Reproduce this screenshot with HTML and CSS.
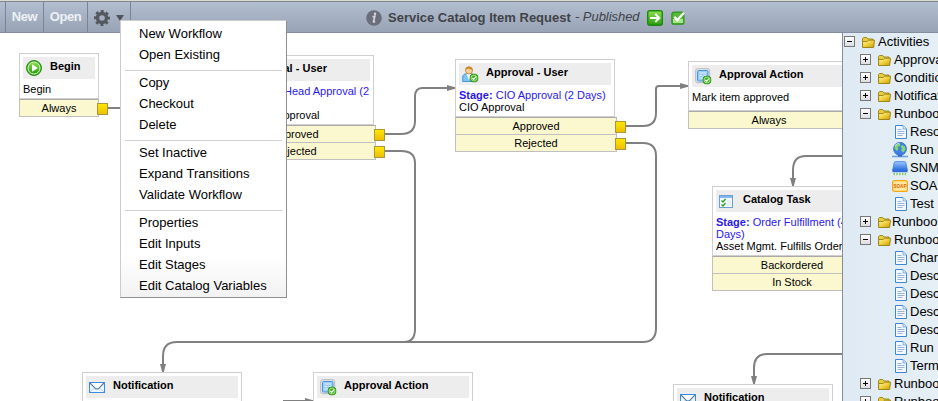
FILE: index.html
```html
<!DOCTYPE html>
<html lang="en">
<head>
<meta charset="utf-8">
<title>Workflow Editor</title>
<link rel="stylesheet" href="styles.css">
</head>
<body>
<svg class="defs" width="0" height="0" aria-hidden="true">
  <defs>
    <linearGradient id="green" x1="0" y1="0" x2="0" y2="1"><stop offset="0" stop-color="#8ee04c"/><stop offset="1" stop-color="#269a10"/></linearGradient>
    <linearGradient id="gold" x1="0" y1="0" x2="1" y2="1"><stop offset="0" stop-color="#fff6b0"/><stop offset=".5" stop-color="#f0d040"/><stop offset="1" stop-color="#c89c00"/></linearGradient>
    <linearGradient id="blue" x1="0" y1="0" x2="0" y2="1"><stop offset="0" stop-color="#9cc8ff"/><stop offset="1" stop-color="#2468dc"/></linearGradient>
    <marker id="arrow" markerUnits="userSpaceOnUse" markerWidth="9" markerHeight="6" refX="8" refY="3" orient="auto"><path d="M0 0L8 2.2V3.8L0 6z" fill="#808080"/></marker>
  </defs>
  <symbol id="i-play" viewBox="0 0 16 16"><circle cx="8" cy="8" r="7.5" fill="#37a51e" stroke="#2d8d1a"/><circle cx="8" cy="8" r="6" fill="url(#green)" stroke="#d9f6c6"/><path d="M6 4.3v7.4L12 8z" fill="#fff"/></symbol>
  <symbol id="i-ok" viewBox="0 0 9 9"><circle cx="4.5" cy="4.5" r="4.1" fill="#41b31e" stroke="#2b8a14" stroke-width=".8"/><circle cx="4.5" cy="4.5" r="2.9" fill="none" stroke="#c9f2b0" stroke-width=".7"/><path d="M2.8 4.5l1.4 1.4 2.2-2.7" fill="none" stroke="#fff" stroke-width="1.1"/></symbol>
  <symbol id="i-user" viewBox="0 0 17 17"><path d="M.7 15.5V11C.7 8.500 3 7.500 7 7.500s6 1.500 6 4v4z" fill="#7cc4f2" stroke="#2c84ca" stroke-width=".8"/><path d="M4.500 8l2.500 6 2.500-6z" fill="#fff"/><circle cx="7" cy="4.500" r="3.500" fill="#f8cf9c" stroke="#b97824" stroke-width=".7"/><path d="M3.300 4.500C3 1.500 5 .4 7 .4s4 1.200 3.700 4.100C9.500 3 7.500 3.500 6 2.800 5 3 4 3.500 3.300 4.500z" fill="#cf8a2a"/><use href="#i-ok" x="7.500" y="7.500" width="9" height="9"/></symbol>
  <symbol id="i-action" viewBox="0 0 17 17"><rect x=".7" y=".7" width="14" height="14" rx="2" fill="#e2e6ea" stroke="#b4bac2"/><rect x="2.500" y="2.500" width="10.500" height="10.500" rx="1" fill="#9ccdfa" stroke="#4d93d9"/><path d="M4.500 5h6.500M4.500 7.500h2.500m1.500 0H11M4.500 10h4" stroke="#dff0ff" stroke-width="1.200"/><use href="#i-ok" x="7.500" y="7.500" width="9" height="9"/></symbol>
  <symbol id="i-task" viewBox="0 0 14 13"><rect x=".5" y=".5" width="13" height="12" fill="#f4faff" stroke="#6b9fd3"/><path d="M1 2h12" stroke="#80b9f2" stroke-width="2"/><path d="M2.500 5.500L4 7l2.500-3M2.500 9.500L4 11l2.500-3" fill="none" stroke="#35a020" stroke-width="1.400"/><path d="M8 6h4M8 8h4M8 10h4" stroke="#d8e8f6"/></symbol>
  <symbol id="i-mail" viewBox="0 0 16 11"><rect x=".5" y=".5" width="15" height="10" fill="#eef6ff" stroke="#3d8ae0"/><path d="M1 10l4.500-4M15 10l-4.500-4" stroke="#b8d4f5"/><path d="M1 1l5 5.200q2 1.500 4 0L15 1" fill="#fff" stroke="#527aa6" stroke-width="1.100"/></symbol>
  <symbol id="i-folder" viewBox="0 0 13 11"><path d="M.5 9.500V1.500l1-1h3.200l1.300 1.500H11V10H1z" fill="#e8cc40" stroke="#96800c" stroke-width=".9"/><path d="M.6 4.500h4.700l1.200-1.300h6.100L11.600 10.500H.6z" fill="url(#gold)" stroke="#907808" stroke-width=".8"/></symbol>
  <symbol id="i-doc" viewBox="0 0 12 14"><path d="M.5.5H8L11.500 4v9.500H.5z" fill="#f3f9ff" stroke="#3d86d6"/><path d="M8 .5V4h3.500" fill="#cfe4fb" stroke="#69a3e4" stroke-width=".8"/><path d="M2.500 4.500h4M2.500 6.500h7M2.500 8.500h7M2.500 10.500h5" stroke="#8cadd6" stroke-width=".9"/></symbol>
  <symbol id="i-globe" viewBox="0 0 16 16"><path d="M0 14.500h16" stroke="#6fa5e8" stroke-width="1.600"/><path d="M8 12v3" stroke="#477fc9" stroke-width="4"/><circle cx="8" cy="6.800" r="6.500" fill="#3f7fe6" stroke="#2458b8" stroke-width=".6"/><path d="M3 3q3-2.500 5.500-1.500L8 4 5.500 5 6.500 7 4.500 9 2.500 6zM10 3l3 1.500.5 3-2 3-2.500-2L10 6 8.500 5z" fill="#86d870"/><path d="M3 4q1-2 4-3" stroke="#cfe3ff" fill="none"/></symbol>
  <symbol id="i-drive" viewBox="0 0 16 15"><path d="M3.500.6h9q1 0 1.300 1L15.500 9.500H.5L2.200 1.600q.3-1 1.300-1z" fill="url(#blue)" stroke="#3b72d4" stroke-width=".7"/><path d="M.5 9.200h15v2.300H.5z" fill="#2f69d5"/><path d="M.5 11.500h15V14.500H.5z" fill="#eef5ee"/><path d="M1.500 13.200h13" stroke="#7fc66e" stroke-width="2.200" stroke-dasharray="1.500 1.300"/></symbol>
  <symbol id="i-soap" viewBox="0 0 16 12"><rect x=".6" y=".6" width="14.800" height="10.800" rx="2" fill="#ffe9a0" stroke="#f5a70c" stroke-width="1.200"/><text x="8" y="8.300" text-anchor="middle" font-family="Liberation Sans" font-size="6.200" font-weight="700" fill="#e35b00" textLength="13" lengthAdjust="spacingAndGlyphs">SOAP</text></symbol>
</svg>

<header class="toolbar">
  <span class="tool stub"></span>
  <span class="tool new">New</span>
  <span class="tool open">Open</span>
  <span class="tool gear">
    <svg width="16" height="16" viewBox="0 0 16 16"><circle cx="8" cy="8" r="4.500" fill="none" stroke="#54585f" stroke-width="3.400"/><circle cx="8" cy="8" r="6.800" fill="none" stroke="#54585f" stroke-width="2.400" stroke-dasharray="3 2.340" stroke-dashoffset="1.500"/></svg>
    <svg width="8" height="6" viewBox="0 0 8 6"><path d="M0 0h8L4 6z" fill="#4f535a"/></svg>
  </span>
  <div class="title">
    <svg class="info" width="16" height="16" viewBox="0 0 16 16"><circle cx="8" cy="8" r="7.800" fill="#6c6f7b"/><path d="M6.500 6.800L8.800 6.200l-1.300 5.600q.7.500 1.500-.5" fill="none" stroke="#d3d7df" stroke-width="1.700"/><circle cx="9" cy="3.700" r="1.200" fill="#d5d9e0"/></svg>
    <b>Service Catalog Item Request</b><i>- Published</i>
    <svg class="go" width="16" height="16" viewBox="0 0 16 16"><rect x=".7" y=".7" width="14.600" height="14.600" rx="2" fill="url(#green)" stroke="#1c8a0c" stroke-width="1.400"/><path d="M3 8h9M8.300 4l4 4-4 4" fill="none" stroke="#fff" stroke-width="1.900"/></svg>
    <svg class="check" width="15" height="14" viewBox="0 0 15 14"><rect x=".9" y="1.200" width="12" height="12" rx="2" fill="#56b834" stroke="#2d9418" stroke-width="1.200"/><path d="M2 8h10v4H2z" fill="#a9e58a"/><path d="M3.300 5.800l3 3.300L13 1.800" fill="none" stroke="#fff" stroke-width="2.300"/></svg>
  </div>
</header>

<main class="workspace">
  <section class="canvas">
    <svg class="links" width="842" height="368" viewBox="0 33 842 368">
      <path d="M107 108H125"/>
      <path d="M385 134H401Q415 134 415 121V97Q415 88 422 88H455" marker-end="url(#arrow)"/>
      <path d="M385 151H401Q415 151 415 163V329Q415 342 404 342"/>
      <path d="M626 126H643Q656 126 656 113V89Q656 86 659 86H688" marker-end="url(#arrow)"/>
      <path d="M626 143H643Q656 143 656 156V328Q656 342 643 342H177Q163 342 163 356V372" marker-end="url(#arrow)"/>
      <path d="M842 156H806Q793 156 793 170V186" marker-end="url(#arrow)"/>
      <path d="M842 354H767Q754 354 754 368V384" marker-end="url(#arrow)"/>
      <path d="M283 401H313" marker-end="url(#arrow)"/>
    </svg>

    <article class="node begin">
      <div class="card"><h3><svg width="16" height="16"><use href="#i-play"/></svg>Begin</h3><p>Begin</p></div>
      <ul><li>Always</li></ul>
    </article>
    <article class="node head-approval">
      <div class="card"><h3><svg width="17" height="17"><use href="#i-user"/></svg>Approval - User</h3><p><span class="stage"><b>Stage:</b> Dept. Head Approval (2 Days)</span><br>Dept. Head Approval</p></div>
      <ul><li>Approved</li><li>Rejected</li></ul>
    </article>
    <article class="node cio">
      <div class="card"><h3><svg width="17" height="17"><use href="#i-user"/></svg>Approval - User</h3><p><span class="stage"><b>Stage:</b> CIO Approval (2 Days)</span><br>CIO Approval</p></div>
      <ul><li>Approved</li><li>Rejected</li></ul>
    </article>
    <article class="node mark">
      <div class="card"><h3><svg width="17" height="17"><use href="#i-action"/></svg>Approval Action</h3><p>Mark item approved</p></div>
      <ul><li>Always</li></ul>
    </article>
    <article class="node task">
      <div class="card"><h3><svg width="14" height="13"><use href="#i-task"/></svg>Catalog Task</h3><p><span class="stage"><b>Stage:</b> Order Fulfillment (4 Days)</span><br>Asset Mgmt. Fulfills Order</p></div>
      <ul><li>Backordered</li><li>In Stock</li></ul>
    </article>
    <article class="node notify-a">
      <div class="card"><h3><svg width="16" height="11"><use href="#i-mail"/></svg>Notification</h3></div>
    </article>
    <article class="node action-b">
      <div class="card"><h3><svg width="17" height="17"><use href="#i-action"/></svg>Approval Action</h3></div>
    </article>
    <article class="node notify-b">
      <div class="card"><h3><svg width="16" height="11"><use href="#i-mail"/></svg>Notification</h3></div>
    </article>
  </section>

  <aside class="tree">
    <div class="row root"><span class="toggle open-t"></span><svg width="13" height="11"><use href="#i-folder"/></svg>Activities</div>
    <div class="row"><span class="toggle"></span><svg width="13" height="11"><use href="#i-folder"/></svg>Approvals</div>
    <div class="row"><span class="toggle"></span><svg width="13" height="11"><use href="#i-folder"/></svg>Conditions</div>
    <div class="row"><span class="toggle"></span><svg width="13" height="11"><use href="#i-folder"/></svg>Notifications</div>
    <div class="row"><span class="toggle open-t"></span><svg width="13" height="11"><use href="#i-folder"/></svg>Runbook</div>
    <div class="row leaf"><svg width="12" height="14"><use href="#i-doc"/></svg>Resolve</div>
    <div class="row leaf wide"><svg width="16" height="16"><use href="#i-globe"/></svg>Run Probe</div>
    <div class="row leaf wide"><svg width="16" height="15"><use href="#i-drive"/></svg>SNMP</div>
    <div class="row leaf wide"><svg width="16" height="12"><use href="#i-soap"/></svg>SOAP</div>
    <div class="row leaf"><svg width="12" height="14"><use href="#i-doc"/></svg>Test</div>
    <div class="row tight"><span class="toggle"></span><svg width="13" height="11"><use href="#i-folder"/></svg>Runbook</div>
    <div class="row"><span class="toggle open-t"></span><svg width="13" height="11"><use href="#i-folder"/></svg>Runbook</div>
    <div class="row leaf"><svg width="12" height="14"><use href="#i-doc"/></svg>Change</div>
    <div class="row leaf"><svg width="12" height="14"><use href="#i-doc"/></svg>Describe</div>
    <div class="row leaf"><svg width="12" height="14"><use href="#i-doc"/></svg>Describe</div>
    <div class="row leaf"><svg width="12" height="14"><use href="#i-doc"/></svg>Describe</div>
    <div class="row leaf"><svg width="12" height="14"><use href="#i-doc"/></svg>Describe</div>
    <div class="row leaf"><svg width="12" height="14"><use href="#i-doc"/></svg>Run</div>
    <div class="row leaf"><svg width="12" height="14"><use href="#i-doc"/></svg>Terminate</div>
    <div class="row"><span class="toggle"></span><svg width="13" height="11"><use href="#i-folder"/></svg>Runbook</div>
    <div class="row"><span class="toggle"></span><svg width="13" height="11"><use href="#i-folder"/></svg>Runbook</div>
  </aside>
</main>

<nav class="menu">
  <ul><li>New Workflow</li><li>Open Existing</li></ul>
  <ul><li>Copy</li><li>Checkout</li><li>Delete</li></ul>
  <ul><li>Set Inactive</li><li>Expand Transitions</li><li>Validate Workflow</li></ul>
  <ul><li>Properties</li><li>Edit Inputs</li><li>Edit Stages</li><li>Edit Catalog Variables</li></ul>
</nav>
</body>
</html>
```
FILE: styles.css
```css
* { box-sizing: border-box; }
body {
  margin: 0;
  width: 938px;
  height: 401px;
  overflow: hidden;
  background: #fff;
  color: #000;
  font-family: "Liberation Sans", Arial, sans-serif;
  position: relative;
}
ul { list-style: none; margin: 0; padding: 0; }
svg { display: block; flex: none; }
.defs { position: absolute; }

.toolbar {
  display: flex;
  height: 33px;
  border-top: 1px solid #d9dbd5;
  border-bottom: 1px solid #858da0;
  background: linear-gradient(#80858a 0 1px, #b2bfd1 1px, #98a3b5 100%);
}
.tool {
  display: flex;
  align-items: center;
  justify-content: center;
  margin-top: 1px;
  padding-bottom: 1px;
  border-right: 1px solid #7c8491;
  color: #eef1f5;
  font-size: 13px;
  font-weight: 700;
  letter-spacing: -0.4px;
}
.stub { width: 6px; }
.new { width: 38px; }
.open { width: 44px; }
.gear { width: 43px; gap: 6px; padding: 2px 0 0; }
.title {
  display: flex;
  align-items: center;
  margin-left: 235px;
  padding-bottom: 1px;
  color: #414347;
  font-size: 13px;
  white-space: nowrap;
}
.title svg { margin-top: 3px; }
.info { margin-right: 6px; }
.title b { width: 187px; margin-top: 3px; }
.title i { width: 72px; margin-top: 1px; letter-spacing: -0.05px; }
.check { margin-left: 8px; }

.workspace { display: flex; height: 368px; }
.canvas { position: relative; width: 842px; height: 368px; overflow: hidden; }
.links { position: absolute; left: 0; top: 0; }
.links > path { fill: none; stroke: #808080; stroke-width: 2; }

.node { position: absolute; width: 160px; font-size: 11px; }
.card { border: 1px solid #cfcfcf; padding: 3px; background: #fff; height: var(--card); }
.node h3 {
  display: flex;
  align-items: center;
  height: 22px;
  margin: 0 0 4px;
  background: #ededed;
  font-size: 11px;
  line-height: 12px;
  padding: 0 0 4px 27px;
  position: relative;
}
.node h3 svg { position: absolute; left: 3px; top: 3px; }
.node p { margin: 0; line-height: 12px; }
.stage { color: #2a18ee; }
.node li {
  position: relative;
  height: 17px;
  border: 1px solid #c0c0c0;
  border-top: 0;
  background: #fbf8d0;
  text-align: center;
  line-height: 17px;
}
.node li:first-child { height: 18px; border-top: 1px solid #aaa; }
.node li::after {
  content: "";
  position: absolute;
  right: -10px;
  top: 3px;
  width: 9px;
  height: 10px;
  border: 1px solid #a99544;
  background: linear-gradient(#ffe600, #eebf00);
}
.begin { left: 19px; top: 20px; width: 80px; --card: 46px; }
.head-approval { left: 214px; top: 22px; --card: 70px; }
.cio { left: 455px; top: 26px; --card: 58px; }
.head-approval ul, .cio ul { width: 162px; }
.mark { left: 688px; top: 28px; width: 162px; --card: 50px; }
.task { left: 712px; top: 153px; --card: 70px; }
.notify-a { left: 82px; top: 339px; --card: 60px; }
.action-b { left: 313px; top: 339px; --card: 60px; }
.notify-b { left: 673px; top: 351px; --card: 60px; }
.notify-a h3 svg, .notify-b h3 svg { top: 6px; }
.task h3 svg { top: 5px; }

.tree {
  width: 96px;
  overflow: hidden;
  border-left: 1px solid #858c9a;
  background: linear-gradient(90deg, #dfeaf4, #e5eff5);
}
.row {
  display: flex;
  align-items: center;
  height: 18px;
  padding-left: 17px;
  padding-bottom: 2px;
  font-size: 13px;
  white-space: nowrap;
}
.row svg { margin: 2px 3px 0 7px; }
.root { padding-left: 1px; }
.tight svg { margin-right: 1px; }
.leaf { padding-left: 52px; }
.leaf svg { margin: 2px 3px 0 0; }
.wide { padding-left: 49px; }
.wide svg { margin-right: 2px; }
.toggle {
  flex: none;
  width: 11px;
  height: 11px;
  margin-top: 1px;
  border: 1px solid #777;
  background:
    linear-gradient(#000, #000) 2px 4px / 5px 1px no-repeat,
    linear-gradient(#000, #000) 4px 2px / 1px 5px no-repeat,
    linear-gradient(#fff, #ddd);
}
.open-t {
  background:
    linear-gradient(#000, #000) 2px 4px / 5px 1px no-repeat,
    linear-gradient(#fff, #ddd);
}

.menu {
  position: absolute;
  left: 120px;
  top: 20px;
  width: 167px;
  height: 278px;
  padding: 2px 4px 0;
  border: 1px solid #ccc;
  border-right-color: #909090;
  border-bottom-color: #909090;
  background: linear-gradient(#fff 85%, #f2f2f2);
}
.menu ul + ul { border-top: 1px solid #d0d0d0; margin-top: 5px; padding-top: 1px; }
.menu li { height: 21px; padding-left: 14px; font-size: 13px; line-height: 21px; white-space: nowrap; }
```
